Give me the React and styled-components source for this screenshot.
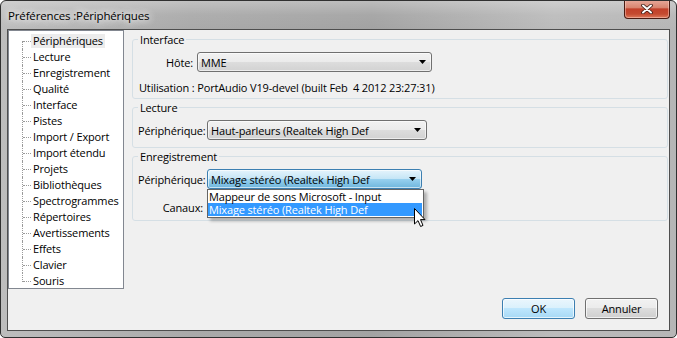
import React from 'react';
import styled, { createGlobalStyle } from 'styled-components';

const GlobalStyle = createGlobalStyle`
  html, body {
    margin: 0;
    padding: 0;
    background: #ffffff;
  }
  body {
    font-family: "Open Sans", "Noto Sans", sans-serif;
    font-size: 11px;
    letter-spacing: -0.15px;
    color: #000;
  }
`;

const Window = styled.div`
  position: relative;
  width: 677px;
  height: 338px;
  box-sizing: border-box;
  border: 1px solid #303030;
  border-radius: 6px 6px 5px 5px;
  padding: 0 6px 6px 6px;
  display: flex;
  flex-direction: column;
  overflow: hidden;
  background:
    linear-gradient(180deg, rgba(255, 255, 255, 0.28) 0, rgba(255, 255, 255, 0.05) 14px, rgba(255, 255, 255, 0) 28px),
    linear-gradient(90deg, #bdbdbd 0%, #aaaaaa 28%, #a3a3a3 55%, #bcbcbc 82%, #b6b6b6 100%);
`;

const TitleBar = styled.div`
  height: 28px;
  display: flex;
  align-items: center;
  justify-content: space-between;
  padding-left: 1px;
`;

const Title = styled.span`
  font-size: 11.5px;
  color: #000;
  text-shadow: 0 0 6px #fff, 0 0 10px rgba(255, 255, 255, 0.9), 0 0 14px rgba(255, 255, 255, 0.7);
`;

const CloseButton = styled.div`
  align-self: flex-start;
  margin-top: -1px;
  width: 46px;
  height: 19px;
  box-sizing: border-box;
  border: 1px solid #4a1b12;
  border-top: none;
  border-radius: 0 0 4px 4px;
  display: flex;
  align-items: center;
  justify-content: center;
  box-shadow: inset 0 0 0 1px rgba(255, 220, 210, 0.45);
  background: linear-gradient(180deg, #e8aa9c 0%, #d88570 42%, #c2402a 50%, #c44a30 78%, #de7a5c 100%);
`;

const Client = styled.div`
  flex: 1;
  border: 1px solid #4e4e4e;
  background: #f0f0f0;
  display: flex;
  flex-direction: column;
`;

const Body = styled.div`
  display: flex;
  align-items: flex-start;
`;

const Tree = styled.div`
  width: 116px;
  height: 259px;
  box-sizing: border-box;
  border: 1px solid #828790;
  background: #fff;
  padding-top: 2px;
`;

const TreeRow = styled.div`
  position: relative;
  height: 16px;

  &::before {
    content: '';
    position: absolute;
    left: 13px;
    top: ${({ $first }) => ($first ? '8px' : '0')};
    height: ${({ $first, $last }) => ($first ? '8px' : $last ? '9px' : '16px')};
    border-left: 1px dotted #9a9a9a;
  }

  &::after {
    content: '';
    position: absolute;
    left: 14px;
    top: 8px;
    width: 8px;
    border-top: 1px dotted #9a9a9a;
  }
`;

const TreeLabel = styled.span`
  display: inline-block;
  margin: 1px 0 0 22px;
  padding: 0 2px;
  line-height: 14px;
  background: ${({ $selected }) => ($selected ? '#ececec' : 'transparent')};
`;

const Panel = styled.div`
  flex: 1;
  margin: 0 1px 0 8px;
  padding-top: 2px;
  display: flex;
  flex-direction: column;
  gap: 1px;
`;

const Group = styled.fieldset`
  margin: 0;
  min-width: 0;
  border: 1px solid #d5dfe5;
  border-radius: 3px;
  padding: 5px 5px ${({ $bottom }) => $bottom}px 5px;
`;

const Legend = styled.legend`
  padding: 0 2px;
  line-height: 15px;
`;

const FieldRow = styled.div`
  display: grid;
  grid-template-columns: ${({ $label }) => $label}px ${({ $width }) => $width}px;
  column-gap: 4px;
  align-items: center;
  height: 20px;
  margin-top: ${({ $gap }) => $gap || 0}px;
`;

const FieldLabel = styled.span`
  text-align: right;
  white-space: nowrap;
`;

const Combo = styled.div`
  position: relative;
  height: 20px;
  box-sizing: border-box;
  border: 1px solid ${({ $active }) => ($active ? '#3c7fb1' : '#707070')};
  border-radius: 3px;
  padding: 0 5px 0 3px;
  display: flex;
  align-items: center;
  justify-content: space-between;
  white-space: nowrap;
  box-shadow: inset 0 0 0 1px rgba(255, 255, 255, 0.6);
  background: ${({ $active }) =>
    $active
      ? 'linear-gradient(180deg, #e5f4fc 0%, #c4e5f6 50%, #98d1ef 50%, #6fb6dd 100%)'
      : 'linear-gradient(180deg, #f2f2f2 0%, #ebebeb 50%, #dddddd 50%, #d2d2d2 100%)'};
`;

const DropList = styled.div`
  position: absolute;
  left: -1px;
  top: 19px;
  width: 217px;
  box-sizing: border-box;
  border: 1px solid #646464;
  background: #fff;
  box-shadow: 3px 3px 3px rgba(0, 0, 0, 0.28);
  padding-bottom: 1px;
  z-index: 2;
`;

const DropItem = styled.div`
  line-height: 13px;
  height: 13px;
  padding-left: 1px;
  margin-right: 1px;
  color: ${({ $hot }) => ($hot ? '#fff' : '#000')};
  background: ${({ $hot }) => ($hot ? '#3399ff' : 'transparent')};
`;

const Cursor = styled.svg`
  position: absolute;
  left: 205px;
  top: 17px;
`;

const InfoLine = styled.div`
  margin-top: 8px;
  line-height: 15px;
  padding-left: 1px;
  white-space: pre;
`;

const Footer = styled.div`
  margin-top: 9px;
  padding-right: 11px;
  display: flex;
  justify-content: flex-end;
  gap: 10px;
`;

const Button = styled.div`
  width: 73px;
  height: 21px;
  box-sizing: border-box;
  border: 1px solid ${({ $default }) => ($default ? '#3c7fb1' : '#707070')};
  border-radius: 3px;
  display: flex;
  align-items: center;
  justify-content: center;
  box-shadow: inset 0 0 0 1px rgba(255, 255, 255, 0.7);
  background: ${({ $default }) =>
    $default
      ? 'linear-gradient(180deg, #eaf6fd 0%, #d9f0fc 50%, #bee6fd 50%, #a7d9f5 100%)'
      : 'linear-gradient(180deg, #f2f2f2 0%, #ebebeb 50%, #dddddd 50%, #cfcfcf 100%)'};
`;

const Arrow = () => (
  <svg width="7" height="4" viewBox="0 0 7 4">
    <path d="M0 0 H7 L3.5 4 Z" fill="#000" />
  </svg>
);

const treeItems = [
  'Périphériques',
  'Lecture',
  'Enregistrement',
  'Qualité',
  'Interface',
  'Pistes',
  'Import / Export',
  'Import étendu',
  'Projets',
  'Bibliothèques',
  'Spectrogrammes',
  'Répertoires',
  'Avertissements',
  'Effets',
  'Clavier',
  'Souris',
];

export default function App() {
  return (
    <>
      <GlobalStyle />
      <Window>
        <TitleBar>
          <Title>Préférences :Périphériques</Title>
          <CloseButton>
            <svg width="12" height="10" viewBox="0 0 12 10">
              <path d="M2 1.5 L10 8.5 M10 1.5 L2 8.5" stroke="#3a1a14" strokeWidth="3.6" strokeLinecap="round" />
              <path d="M2 1.5 L10 8.5 M10 1.5 L2 8.5" stroke="#fff" strokeWidth="2" strokeLinecap="round" />
            </svg>
          </CloseButton>
        </TitleBar>
        <Client>
          <Body>
            <Tree>
              {treeItems.map((item, i) => (
                <TreeRow key={item} $first={i === 0} $last={i === treeItems.length - 1}>
                  <TreeLabel $selected={i === 0}>{item}</TreeLabel>
                </TreeRow>
              ))}
            </Tree>
            <Panel>
              <Group $bottom={3}>
                <Legend>Interface</Legend>
                <FieldRow $label={55} $width={235}>
                  <FieldLabel>Hôte:</FieldLabel>
                  <Combo>
                    <span>MME</span>
                    <Arrow />
                  </Combo>
                </FieldRow>
                <InfoLine>Utilisation : PortAudio V19-devel (built Feb  4 2012 23:27:31)</InfoLine>
              </Group>
              <Group $bottom={7}>
                <Legend>Lecture</Legend>
                <FieldRow $label={65} $width={220}>
                  <FieldLabel>Périphérique:</FieldLabel>
                  <Combo>
                    <span>Haut-parleurs (Realtek High Def</span>
                    <Arrow />
                  </Combo>
                </FieldRow>
              </Group>
              <Group $bottom={3}>
                <Legend>Enregistrement</Legend>
                <FieldRow $label={65} $width={215}>
                  <FieldLabel>Périphérique:</FieldLabel>
                  <Combo $active>
                    <span>Mixage stéréo (Realtek High Def</span>
                    <Arrow />
                    <DropList>
                      <DropItem>Mappeur de sons Microsoft - Input</DropItem>
                      <DropItem $hot>Mixage stéréo (Realtek High Def</DropItem>
                      <Cursor width="13" height="21" viewBox="0 0 13 21">
                        <path
                          d="M1.5 1.5 L1.5 17 L5 13.6 L7.6 19.5 L10 18.4 L7.5 12.6 L12 12.6 Z"
                          fill="#fff"
                          stroke="#000"
                          strokeWidth="1"
                          strokeLinejoin="round"
                        />
                      </Cursor>
                    </DropList>
                  </Combo>
                </FieldRow>
                <FieldRow $label={65} $width={215} $gap={8}>
                  <FieldLabel>Canaux:</FieldLabel>
                  <span />
                </FieldRow>
              </Group>
            </Panel>
          </Body>
          <Footer>
            <Button $default>OK</Button>
            <Button>Annuler</Button>
          </Footer>
        </Client>
      </Window>
    </>
  );
}
